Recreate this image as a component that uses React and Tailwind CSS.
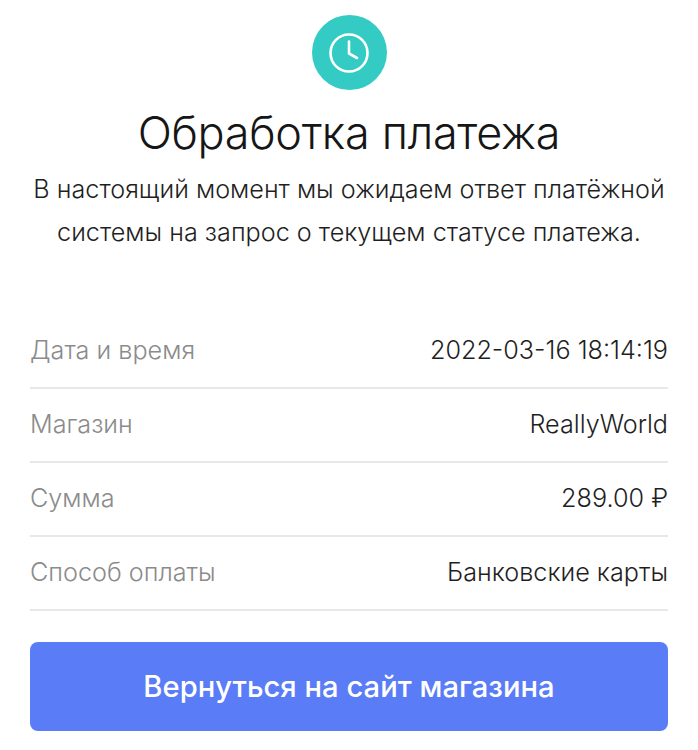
import React from 'react';

const rows = [
  { label: 'Дата и время', value: '2022-03-16 18:14:19' },
  { label: 'Магазин', value: 'ReallyWorld' },
  { label: 'Сумма', value: '289.00 ₽' },
  { label: 'Способ оплаты', value: 'Банковские карты' },
];

export default function App() {
  return (
    <div className="w-[698px] h-[750px] overflow-hidden bg-white px-[30px] pt-[15px] font-['Inter',sans-serif] text-[#1f1f1f]">
      {/* Status icon */}
      <div className="flex justify-center">
        <div className="flex h-[75px] w-[75px] items-center justify-center rounded-full bg-[#33cbc4]">
          <svg width="40" height="40" viewBox="0 0 40 40" fill="none" stroke="white" strokeWidth="2.6" strokeLinecap="round" strokeLinejoin="round">
            <circle cx="20" cy="20" r="18.5" />
            <path d="M20 8.5V20.5L28 25" />
          </svg>
        </div>
      </div>

      {/* Heading */}
      <h1 className="mt-[17px] text-center text-[45px] leading-[52px] font-light tracking-[-0.3px] text-[#161616]">Обработка платежа</h1>
      <p className="-mx-[10px] mt-[9px] text-center text-[25.2px] leading-[43px] font-light">
        В настоящий момент мы ожидаем ответ платёжной
        <br />
        системы на запрос о текущем статусе платежа.
      </p>

      {/* Payment details */}
      <div className="mt-[61px]">
        {rows.map((row) => (
          <div key={row.label} className="flex h-[74px] items-center justify-between border-b-2 border-[#e8e8e8] text-[25.2px] font-light">
            <span className="text-[#8b8b8b]">{row.label}</span>
            <span>{row.value}</span>
          </div>
        ))}
      </div>

      <button className="mt-[31px] h-[89px] w-full rounded-[8px] bg-[#5a7cf6] text-[29.2px] font-medium text-white">
        Вернуться на сайт магазина
      </button>
    </div>
  );
}
